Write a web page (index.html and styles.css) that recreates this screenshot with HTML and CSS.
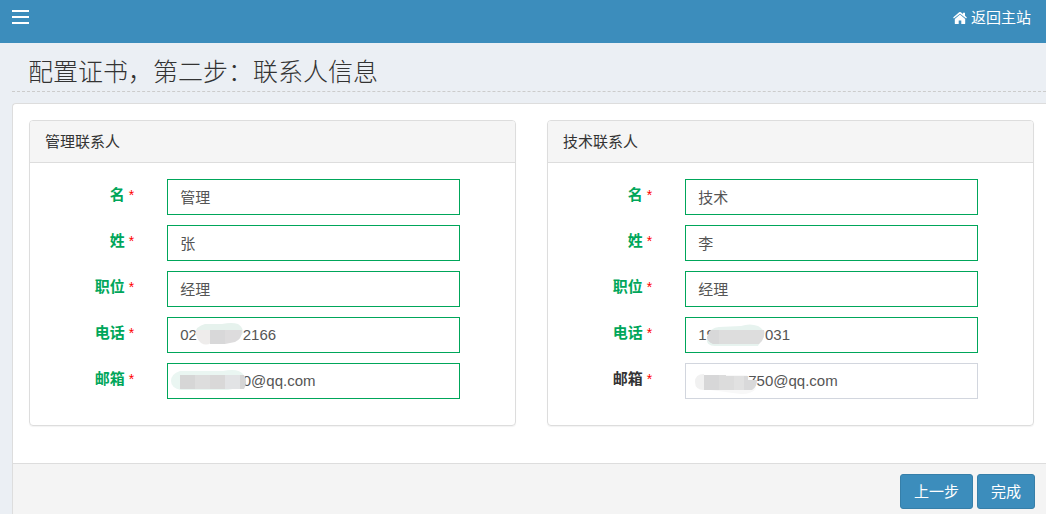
FILE: index.html
```html
<!DOCTYPE html>
<html lang="zh-CN">
<head>
<meta charset="utf-8">
<meta name="viewport" content="width=device-width, initial-scale=1">
<title>配置证书</title>
<link rel="stylesheet" href="styles.css">
</head>
<body>
<header class="topbar">
  <button class="menu-toggle" type="button" aria-label="菜单"><span class="bar"></span><span class="bar"></span><span class="bar"></span></button>
  <a class="home-link" href="#">
    <svg class="home-icon" viewBox="0 0 14 12" aria-hidden="true">
      <path fill="#fff" d="M7 2.600 12.200 7v4.400q0 .6-.6.6H8.300V8.500H5.700V12H2.400q-.6 0-.6-.6V7z"/>
      <path fill="#fff" d="M7 0q.5 0 .9.300L10 2.100V.8h2v3l1.900 1.700-.8.900L7 1.700.9 6.400l-.8-.9L6.100.300Q6.500 0 7 0z"/>
    </svg>
    <span>返回主站</span>
  </a>
</header>
<main class="content">
  <h1 class="title">配置证书，第二步：联系人信息</h1>
  <form class="box">
    <div class="contacts">
      <section class="card">
        <h2 class="card-title">管理联系人</h2>
        <div class="fields">
          <div class="field valid"><label for="a-first">名 <span class="required">*</span></label><div class="control"><input id="a-first" type="text" value="管理"></div></div>
          <div class="field valid"><label for="a-last">姓 <span class="required">*</span></label><div class="control"><input id="a-last" type="text" value="张"></div></div>
          <div class="field valid"><label for="a-job">职位 <span class="required">*</span></label><div class="control"><input id="a-job" type="text" value="经理"></div></div>
          <div class="field valid"><label for="a-phone">电话 <span class="required">*</span></label><div class="control"><input id="a-phone" type="text" value="02           2166">
            <svg class="mask" viewBox="0 0 120 34" aria-hidden="true">
              <path fill="#e6f2ed" d="M28 17q1-8 10-10h17q10-2 16 0 5 3 5 9l-4 6H38z"/>
              <path fill="#eeeceb" d="M29 13h15v13q-5 3-10 0-6-5-5-13z"/>
              <path fill="#d8d8d9" d="M43 13h15v14H43z"/>
              <path fill="#dddcdd" d="M58 13h17q0 9-7 12l-10 2z"/>
            </svg></div></div>
          <div class="field valid"><label for="a-mail">邮箱 <span class="required">*</span></label><div class="control"><input id="a-mail" type="text" value="               0@qq.com">
            <svg class="mask" viewBox="0 0 120 34" aria-hidden="true">
              <path fill="#eaf6f2" d="M13 8h43q15-3 20 3 5 7-1 13l-14 3H14Q4 25 4 18q0-7 9-10z"/>
              <path fill="#d6d6d6" d="M13 12h15v14H13z"/>
              <path fill="#dddddd" d="M28 12h15v14H28z"/>
              <path fill="#d9d8d8" d="M43 12h15v14H43z"/>
              <path fill="#e2e3e5" d="M58 12h15v14H58z"/>
              <path fill="#d5d5d5" d="M73 12h4q4 7 0 14h-4z"/>
            </svg></div></div>
        </div>
      </section>
      <section class="card">
        <h2 class="card-title">技术联系人</h2>
        <div class="fields">
          <div class="field valid"><label for="t-first">名 <span class="required">*</span></label><div class="control"><input id="t-first" type="text" value="技术"></div></div>
          <div class="field valid"><label for="t-last">姓 <span class="required">*</span></label><div class="control"><input id="t-last" type="text" value="李"></div></div>
          <div class="field valid"><label for="t-job">职位 <span class="required">*</span></label><div class="control"><input id="t-job" type="text" value="经理"></div></div>
          <div class="field valid"><label for="t-phone">电话 <span class="required">*</span></label><div class="control"><input id="t-phone" type="text" value="19            031">
            <svg class="mask" viewBox="0 0 120 34" aria-hidden="true">
              <path fill="#e7f3ef" d="M26 13q4-3 8-3l22-1q9-3 17 0 6 3 6 9l-6 11H30q-9 0-8-8z"/>
              <path fill="#dddddd" d="M26 13h53q2 8-5 14H31q-8 0-9-7z"/>
              <path fill="#d8d8d9" d="M26 13h8v14h-6q-6-3-6-7z"/>
            </svg></div></div>
          <div class="field"><label for="t-mail">邮箱 <span class="required">*</span></label><div class="control"><input id="t-mail" type="text" value="            750@qq.com">
            <svg class="mask" viewBox="0 0 120 34" aria-hidden="true">
              <path fill="#f8f8f8" d="M22 12h40l9 13q-3 6-15 6l-31-4z"/>
              <path fill="#f1f1f1" d="M19 11v16q-9 0-9-8t9-8z"/>
              <path fill="#d7d7d8" d="M19 12h15v15H19z"/>
              <path fill="#dcdcdc" d="M34 12h7v1h15v14H34z"/>
              <path fill="#e1e1e1" d="M49 13h10v14H49z"/>
              <path fill="#d9d9da" d="M59 13h4v4h9q0 7-5 10h-8z"/>
            </svg></div></div>
        </div>
      </section>
    </div>
    <footer class="actions">
      <button class="btn" type="button">上一步</button>
      <button class="btn" type="submit">完成</button>
    </footer>
  </form>
</main>
</body>
</html>
```

FILE: styles.css
```css
* { box-sizing: border-box; }

body {
  display: flex;
  flex-direction: column;
  min-height: 100vh;
  margin: 0;
  background: #ebeff4;
  color: #333;
  font: 15px/21px "Liberation Sans", "Noto Sans CJK SC", sans-serif;
}

.topbar {
  display: flex;
  justify-content: space-between;
  align-items: flex-start;
  min-height: 43px;
  padding: 7px 15px 0 12px;
  background: #3c8dbc;
}

.menu-toggle {
  display: flex;
  flex-direction: column;
  gap: 4px;
  padding: 3px 0;
  border: 0;
  background: none;
}

.bar { width: 17px; height: 2px; background: #fff; }

.home-link {
  display: flex;
  align-items: center;
  gap: 4px;
  color: #fff;
  text-decoration: none;
}

.home-icon { width: 14px; height: 12px; }

.content {
  display: flex;
  flex: 1;
  flex-direction: column;
  padding-left: 12px;
}

.title {
  margin: 0 0 11px;
  padding: 11px 16px 1px;
  border-bottom: 1px dashed #ccc;
  font-size: 25px;
  font-weight: 300;
  line-height: 36px;
}

.box {
  display: flex;
  flex: 1;
  flex-direction: column;
  border: solid #ddd;
  border-width: 1px 0 0 1px;
  border-top-left-radius: 4px;
  background: #fff;
}

.contacts {
  display: grid;
  grid-template-columns: 1fr 1fr;
  gap: 31px;
  padding: 16px 12px 37px 16px;
}

.card {
  border: 1px solid #ddd;
  border-radius: 4px;
  box-shadow: 0 1px 1px rgba(0, 0, 0, 0.05);
}

.card-title {
  margin: 0;
  padding: 10px 15px;
  border-bottom: 1px solid #ddd;
  border-radius: 3px 3px 0 0;
  background: #f5f5f5;
  font-size: 15px;
  font-weight: 400;
  line-height: 21px;
}

.fields {
  display: flex;
  flex-direction: column;
  gap: 10px;
  padding: 16px 0 26px;
}

.field {
  display: grid;
  grid-template-columns: 3fr 8fr 1fr;
}

.field label {
  padding: 5px 17px 0 15px;
  font-weight: 700;
  text-align: right;
}

.required { color: #f00; font-size: 14px; font-weight: 400; }

.control { position: relative; padding: 0 15px 0 16px; }

.control input {
  display: block;
  width: 100%;
  height: 36px;
  padding: 5px 12px 7px;
  border: 1px solid #d2d6de;
  border-radius: 0;
  background: #fff;
  color: #555;
  font: inherit;
}

.valid label { color: #00a65a; }
.valid input { border-color: #00a65a; }

.mask {
  position: absolute;
  top: 0;
  left: 16px;
  width: 120px;
  height: 34px;
  pointer-events: none;
}

.actions {
  display: flex;
  flex: 1;
  justify-content: flex-end;
  align-items: flex-start;
  gap: 4px;
  padding: 10px 11px 4px;
  border-top: 1px solid #ddd;
  background: #f4f4f4;
}

.btn {
  padding: 6px 13px;
  border: 1px solid #367fa9;
  border-radius: 3px;
  background: #3c8dbc;
  color: #fff;
  font: inherit;
}
```
